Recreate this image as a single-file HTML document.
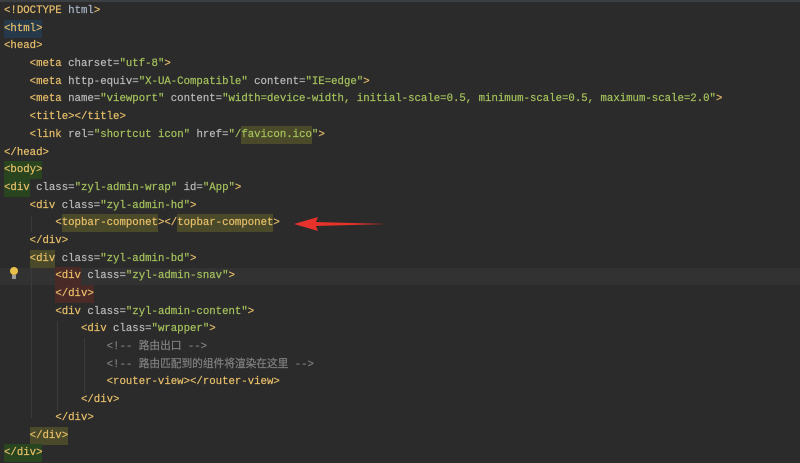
<!DOCTYPE html>
<html><head><style>
html,body{margin:0;padding:0;background:#2b2b2b;width:800px;height:459px;overflow:hidden}
.top{position:absolute;left:0;top:0;width:800px;height:2px;background:#3c3f41}
.cl{position:absolute;left:0;top:268px;width:800px;height:17px;background:#323232}
pre{position:absolute;left:4px;top:3px;margin:0;font-family:"Liberation Mono","Noto Sans CJK SC",monospace;font-size:10.7px;line-height:17.68px;color:#bababa;white-space:pre;-webkit-text-stroke:0.2px}
.t{color:#e8bf6a}.v{color:#a5c25c}.c{color:#808080}.d{color:#a9b7c6}
.h1,.h2,.h3,.h4{padding:3px 0}
.h1{background:#26394a}.h2{background:#28451f}.h3{background:#4a4a2a}.h4{background:#4a2a26}
.guide{position:absolute;width:1px;background:#3b3b3b}
</style></head><body>
<div class="top"></div>
<div class="cl"></div>
<div class="guide" style="left:31px;top:216px;height:16px"></div>
<div class="guide" style="left:31px;top:268px;height:150px"></div>
<div class="guide" style="left:57px;top:321px;height:90px"></div>
<div class="guide" style="left:84px;top:338px;height:55px"></div>
<pre><span class="t">&lt;!DOCTYPE</span> <span class="d">html</span><span class="t">&gt;</span>
<span class="t h1">&lt;html&gt;</span>
<span class="t">&lt;head&gt;</span>
    <span class="t">&lt;meta</span> charset=<span class="v">"utf-8"</span><span class="t">&gt;</span>
    <span class="t">&lt;meta</span> http-equiv=<span class="v">"X-UA-Compatible"</span> content=<span class="v">"IE=edge"</span><span class="t">&gt;</span>
    <span class="t">&lt;meta</span> name=<span class="v">"viewport"</span> content=<span class="v">"width=device-width, initial-scale=0.5, minimum-scale=0.5, maximum-scale=2.0"</span><span class="t">&gt;</span>
    <span class="t">&lt;title&gt;&lt;/title&gt;</span>
    <span class="t">&lt;link</span> rel=<span class="v">"shortcut icon"</span> href=<span class="v">"/<span class="h3">favicon.ico</span>"</span><span class="t">&gt;</span>
<span class="t">&lt;/head&gt;</span>
<span class="t h2">&lt;body&gt;</span>
<span class="t h2">&lt;div</span> class=<span class="v">"zyl-admin-wrap"</span> id=<span class="v">"App"</span><span class="t">&gt;</span>
    <span class="t">&lt;div</span> class=<span class="v">"zyl-admin-hd"</span><span class="t">&gt;</span>
        <span class="t">&lt;<span class="h3">topbar-componet</span>&gt;&lt;/<span class="h3">topbar-componet</span>&gt;</span>
    <span class="t">&lt;/div&gt;</span>
    <span class="t h3">&lt;div</span> class=<span class="v">"zyl-admin-bd"</span><span class="t">&gt;</span>
        <span class="t h4">&lt;div</span> class=<span class="v">"zyl-admin-snav"</span><span class="t">&gt;</span>
        <span class="t h4">&lt;/div&gt;</span>
        <span class="t">&lt;div</span> class=<span class="v">"zyl-admin-content"</span><span class="t">&gt;</span>
            <span class="t">&lt;div</span> class=<span class="v">"wrapper"</span><span class="t">&gt;</span>
                <span class="c">&lt;!-- 路由出口 --&gt;</span>
                <span class="c">&lt;!-- 路由匹配到的组件将渲染在这里 --&gt;</span>
                <span class="t">&lt;router-view&gt;&lt;/router-view&gt;</span>
            <span class="t">&lt;/div&gt;</span>
        <span class="t">&lt;/div&gt;</span>
    <span class="t h3">&lt;/div&gt;</span>
<span class="t h2">&lt;/div&gt;</span></pre>
<svg style="position:absolute;left:0;top:0" width="800" height="459">
<circle cx="14" cy="271" r="4" fill="#e8c04a"/><rect x="12" y="275" width="4" height="4" fill="#999"/>
<polygon points="294,224 318,217 316,222 387,224 316,226 318,231" fill="#e8312a"/>
</svg>
</body></html>
